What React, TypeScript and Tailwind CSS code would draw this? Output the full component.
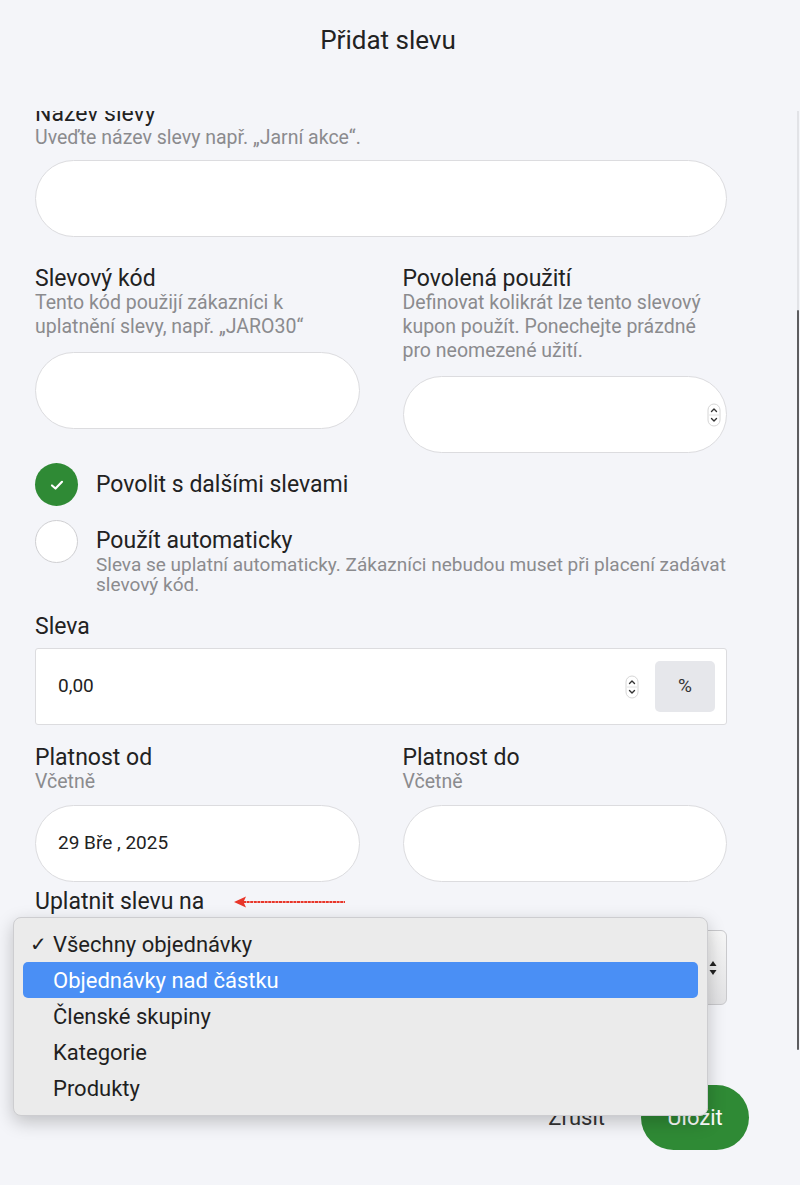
import type { ReactNode } from "react";

const FONT = { fontFamily: "Roboto, 'Noto Sans', sans-serif" };

function Spinner() {
  return (
    <svg width="14" height="24" viewBox="0 0 14 24" className="shrink-0">
      <rect x="1" y="1" width="12" height="22" rx="6" fill="#fff" stroke="#d6d6d6" />
      <line x1="2" y1="12" x2="12" y2="12" stroke="#e2e2e2" />
      <path d="M4.5 8.5 L7 6 L9.5 8.5" fill="none" stroke="#333" strokeWidth="1.4" strokeLinecap="round" strokeLinejoin="round" />
      <path d="M4.5 15.5 L7 18 L9.5 15.5" fill="none" stroke="#333" strokeWidth="1.4" strokeLinecap="round" strokeLinejoin="round" />
    </svg>
  );
}

function Label({ children }: { children: ReactNode }) {
  return <div className="text-[23px] leading-6 text-[#222]">{children}</div>;
}

function Help({ children, className = "" }: { children: ReactNode; className?: string }) {
  return <div className={`text-[19.5px] leading-6 text-[#8b8b8e] ${className}`}>{children}</div>;
}

function PillInput({ children, className = "" }: { children?: ReactNode; className?: string }) {
  return (
    <div className={`flex h-[77px] items-center rounded-full border border-[#dcdcdf] bg-white px-[22px] text-[19px] text-[#222] ${className}`}>
      {children}
    </div>
  );
}

export default function App() {
  return (
    <div className="relative h-[1185px] w-[800px] overflow-hidden bg-[#f4f5f9]" style={FONT}>
      <header className="h-[111px] pt-[25px] pr-[24px] text-center text-[26px] leading-[30px] text-[#222]">Přidat slevu</header>

      <div className="relative h-[949px] overflow-hidden">
        <div className="-mt-[9px] pl-[35px] pr-[73px]">
          <Label>Název slevy</Label>
          <div className="mt-[2px] text-[19.5px] leading-5 text-[#8b8b8e]">Uveďte název slevy např. „Jarní akce“.</div>
          <PillInput className="mt-3 h-[76px]" />

          <div className="mt-[30px] grid grid-cols-2 gap-x-[43px]">
            <div>
              <Label>Slevový kód</Label>
              <Help>Tento kód použijí zákazníci k uplatnění slevy, např. „JARO30“</Help>
              <PillInput className="mt-[13px]" />
            </div>
            <div>
              <Label>Povolená použití</Label>
              <Help>Definovat kolikrát lze tento slevový kupon použít. Ponechejte prázdné pro neomezené užití.</Help>
              <PillInput className="mt-[13px] justify-end pr-[5px]">
                <Spinner />
              </PillInput>
            </div>
          </div>

          <div className="mt-[10px] flex items-center gap-[18px]">
            <div className="flex h-[43px] w-[43px] items-center justify-center rounded-full bg-[#2f8a35]">
              <svg width="18" height="18" viewBox="0 0 18 18">
                <path d="M4 9.5 L7.5 12.5 L14 5.8" fill="none" stroke="#fff" strokeWidth="2.2" strokeLinecap="round" strokeLinejoin="round" />
              </svg>
            </div>
            <span className="text-[23px] leading-6 text-[#222]">Povolit s dalšími slevami</span>
          </div>

          <div className="mt-[14px] flex items-start gap-[18px]">
            <div className="h-[43px] w-[43px] shrink-0 rounded-full border border-[#cfcfd2] bg-white" />
            <div className="-mr-[12px] mt-[9px]">
              <div className="text-[23px] leading-6 text-[#222]">Použít automaticky</div>
              <div className="mt-[2px] text-[19px] leading-5 text-[#8b8b8e]">
                Sleva se uplatní automaticky. Zákazníci nebudou muset při placení zadávat slevový kód.
              </div>
            </div>
          </div>

          <div className="mt-[20px]">
            <Label>Sleva</Label>
          </div>
          <div className="mt-[9px] flex h-[77px] items-center rounded-[3px] border border-[#dcdcdf] bg-white pl-[22px] pr-[11px]">
            <span className="flex-1 text-[19px] text-[#222]">0,00</span>
            <Spinner />
            <div className="ml-[16px] flex h-[51px] w-[60px] items-center justify-center rounded-[5px] bg-[#e6e7eb] text-[19px] text-[#333]">%</div>
          </div>

          <div className="mt-[21px] grid grid-cols-2 gap-x-[43px]">
            <div>
              <Label>Platnost od</Label>
              <Help>Včetně</Help>
              <PillInput className="mt-[11px]">29 Bře , 2025</PillInput>
            </div>
            <div>
              <Label>Platnost do</Label>
              <Help>Včetně</Help>
              <PillInput className="mt-[11px]" />
            </div>
          </div>

          <div className="mt-[8px] flex items-center gap-[29px]">
            <Label>Uplatnit slevu na</Label>
            <svg width="114" height="16" viewBox="0 0 114 16">
              <line x1="10" y1="8" x2="112" y2="8" stroke="#e8362a" strokeWidth="2.2" strokeDasharray="3 0.6" />
              <path d="M1 8 L13 2.5 L10.5 8 L13 13.5 Z" fill="#e8362a" />
            </svg>
          </div>

          <div className="mt-[16px] flex h-[75px] items-center justify-end rounded-[6px] border border-[#c9c9cc] bg-gradient-to-b from-[#f7f7f7] to-[#e2e2e4] pr-[8px]">
            <svg width="10" height="20" viewBox="0 0 10 20">
              <path d="M1.5 8 L5 3 L8.5 8 Z" fill="#222" />
              <path d="M1.5 12 L5 17 L8.5 12 Z" fill="#222" />
            </svg>
          </div>
        </div>

        <div className="absolute right-[1px] top-0 h-[199px] w-[2px] bg-[#e2e3e7]" />
        <div className="absolute right-[1px] top-[199px] h-[740px] w-[2px] rounded-full bg-[#5d5d60]" />
      </div>

      <div className="flex items-center justify-end gap-[36px] pr-[51px] pt-[25px]">
        <span className="text-[22px] text-[#333]">Zrušit</span>
        <div className="flex h-[65px] w-[108px] items-center justify-center rounded-full bg-[#2f8a35] text-[22px] text-white">Uložit</div>
      </div>

      <div className="absolute left-[13px] top-[917px] w-[695px] rounded-[8px] border border-[#cdcdd0] bg-[#ebebeb] px-[9px] pb-[9px] pt-[8px] shadow-[0_6px_18px_rgba(0,0,0,0.22)]">
        {[
          { t: "Všechny objednávky", check: true },
          { t: "Objednávky nad částku", active: true },
          { t: "Členské skupiny" },
          { t: "Kategorie" },
          { t: "Produkty" },
        ].map((o) => (
          <div
            key={o.t}
            className={`relative flex h-[36px] items-center rounded-[5px] pl-[30px] text-[22px] ${o.active ? "bg-[#4a8ff5] text-white" : "text-[#1f1f1f]"}`}
          >
            {o.check && <span className="absolute left-[7px] text-[20px]">✓</span>}
            {o.t}
          </div>
        ))}
      </div>
    </div>
  );
}
